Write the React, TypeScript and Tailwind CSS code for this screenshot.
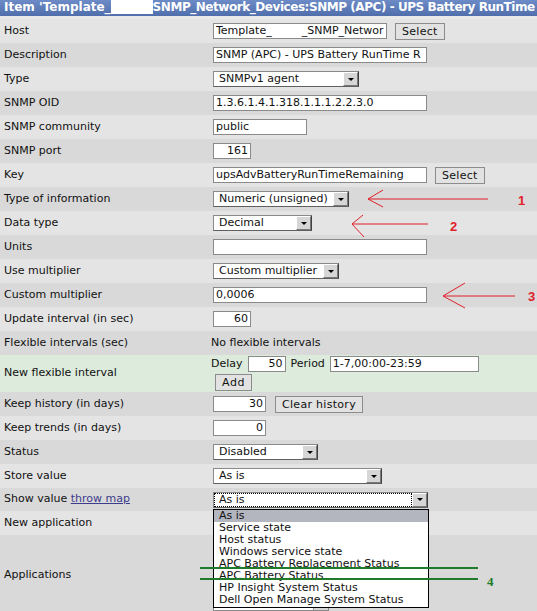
import type { ReactNode } from 'react'

// Zabbix 1.8 style item edit form

function Input({ className = '', children }: { className?: string; children?: ReactNode }) {
  return (
    <div
      className={`h-[16px] border border-[#8a8a8a] bg-white px-[2px] leading-[14px] overflow-hidden whitespace-nowrap ${className}`}
    >
      {children}
    </div>
  )
}

function Select({ className = '', value, focused }: { className?: string; value: string; focused?: boolean }) {
  return (
    <div className={`h-[16px] flex border border-[#8a8a8a] border-r-[#404040] border-b-[#606060] bg-white ${className}`}>
      <div className="flex-1 p-[1px] overflow-hidden">
        <div
          className={`h-full pl-[4px] leading-[12px] whitespace-nowrap ${
            focused ? 'outline outline-1 outline-dotted outline-black' : ''
          }`}
        >
          {value}
        </div>
      </div>
      <div className="w-[15px] h-full flex items-center justify-center bg-[#d6d6d6] border-t border-l border-t-white border-l-white border-r border-b border-r-[#7a7a7a] border-b-[#7a7a7a]">
        <div className="w-0 h-0 border-l-[3px] border-r-[3px] border-t-[3px] border-l-transparent border-r-transparent border-t-black" />
      </div>
    </div>
  )
}

function Button({ children, className = '' }: { children: ReactNode; className?: string }) {
  return (
    <div
      className={`h-[17px] px-[6px] border border-[#8c8c8c] bg-[#e2e2e2] leading-[15px] whitespace-nowrap tracking-[0.3px] ${className}`}
    >
      {children}
    </div>
  )
}

function Row({
  label,
  children,
  tone,
  className = 'h-[24px]',
}: {
  label: ReactNode
  children?: ReactNode
  tone: 'light' | 'dark' | 'green'
  className?: string
}) {
  const bg = tone === 'green' ? 'bg-[#dcebdb]' : tone === 'light' ? 'bg-[#e4e4e4]' : 'bg-[#d9d9d9]'
  return (
    <div className={`flex ${bg} ${className}`}>
      <div className="w-[211px] pl-[4px] flex items-center shrink-0">{label}</div>
      <div className="flex-1 relative flex items-center pl-[2px]">{children}</div>
    </div>
  )
}

const showValueOptions = [
  'As is',
  'Service state',
  'Host status',
  'Windows service state',
  'APC Battery Replacement Status',
  'APC Battery Status',
  'HP Insight System Status',
  'Dell Open Manage System Status',
]

export default function App() {
  return (
    <div className="relative w-[537px] h-[611px] overflow-hidden bg-[#dedede] font-['DejaVu_Sans',sans-serif] text-[11px] text-[#111]">
      {/* title bar */}
      <div className="h-[19px] bg-gradient-to-b from-[#6d8bc6] to-[#4f6eab] border-b-[3px] border-[#e9e9e9] text-white font-bold text-[12px] leading-[15px] pl-[4px] whitespace-nowrap overflow-hidden">
        Item 'Template_
        <span className="inline-block align-top w-[42px] h-[14px] bg-white" />
        <span className="tracking-[-0.45px]">SNMP_Network_Devices:SNMP (APC) - UPS Battery RunTime</span>
      </div>

      <Row label="Host" tone="light">
        <Input className="w-[174px]">
          Template_<span className="inline-block w-[30px]" />_SNMP_Networ
        </Input>
        <Button className="ml-[8px]">Select</Button>
      </Row>
      <Row label="Description" tone="dark">
        <Input className="w-[214px]">SNMP (APC) - UPS Battery RunTime R</Input>
      </Row>
      <Row label="Type" tone="light">
        <Select className="w-[146px]" value="SNMPv1 agent" />
      </Row>
      <Row label="SNMP OID" tone="dark">
        <Input className="w-[214px]">1.3.6.1.4.1.318.1.1.1.2.2.3.0</Input>
      </Row>
      <Row label="SNMP community" tone="light">
        <Input className="w-[94px]">public</Input>
      </Row>
      <Row label="SNMP port" tone="dark">
        <Input className="w-[38px] text-right">161</Input>
      </Row>
      <Row label="Key" tone="light">
        <Input className="w-[214px]">upsAdvBatteryRunTimeRemaining</Input>
        <Button className="ml-[8px]">Select</Button>
      </Row>
      <Row label="Type of information" tone="dark">
        <Select className="w-[136px]" value="Numeric (unsigned)" />
      </Row>
      <Row label="Data type" tone="light">
        <Select className="w-[99px]" value="Decimal" />
      </Row>
      <Row label="Units" tone="dark">
        <Input className="w-[214px]" />
      </Row>
      <Row label="Use multiplier" tone="light">
        <Select className="w-[126px]" value="Custom multiplier" />
      </Row>
      <Row label="Custom multiplier" tone="dark">
        <Input className="w-[214px]">0,0006</Input>
      </Row>
      <Row label="Update interval (in sec)" tone="light">
        <Input className="w-[38px] text-right">60</Input>
      </Row>
      <Row label="Flexible intervals (sec)" tone="dark">
        <span className="-ml-[2px]">No flexible intervals</span>
      </Row>
      <Row label="New flexible interval" tone="green" className="h-[37px]">
        <div className="-ml-[2px] flex flex-col gap-[2px]">
          <div className="flex items-center">
            <span>Delay</span>
            <Input className="w-[38px] ml-[5px] text-right">50</Input>
            <span className="ml-[5px]">Period</span>
            <Input className="w-[149px] ml-[5px]">1-7,00:00-23:59</Input>
          </div>
          <Button className="ml-[4px] self-start tracking-[0.6px]">Add</Button>
        </div>
      </Row>
      <Row label="Keep history (in days)" tone="dark">
        <Input className="w-[53px] text-right">30</Input>
        <Button className="ml-[9px]">Clear history</Button>
      </Row>
      <Row label="Keep trends (in days)" tone="light">
        <Input className="w-[53px] text-right">0</Input>
      </Row>
      <Row label="Status" tone="dark">
        <Select className="w-[105px]" value="Disabled" />
      </Row>
      <Row label="Store value" tone="light">
        <Select className="w-[169px]" value="As is" />
      </Row>
      <Row
        label={
          <span>
            Show value <span className="text-[#3c3c8c] underline">throw map</span>
          </span>
        }
        tone="dark"
        className="h-[23px] relative z-10"
      >
        <div className="relative">
          <Select className="w-[215px]" value="As is" focused />
          {/* open list of value maps */}
          <div className="absolute left-0 top-[17px] w-[216px] bg-white border border-black pb-[1px]">
            {showValueOptions.map((opt, i) => (
              <div
                key={opt}
                className={`h-[12px] leading-[12px] pl-[5px] whitespace-nowrap ${i === 0 ? 'bg-[#b3b5bf]' : ''}`}
              >
                {opt}
              </div>
            ))}
          </div>
        </div>
      </Row>
      <Row label="New application" tone="light">
        <Input className="w-[214px]" />
      </Row>
      <Row label="Applications" tone="dark" className="h-[80px]">
        <div className="self-start mt-[2px] w-[116px] h-[74px] border border-[#8a8a8a] bg-white flex justify-end">
          <div className="w-[15px] h-full bg-[#d6d6d6] border-l border-[#9a9a9a]" />
        </div>
      </Row>

      {/* annotation marks */}
      <svg className="absolute inset-0 pointer-events-none z-20" width="537" height="611">
        <g stroke="#e0202a" strokeWidth="1" fill="none">
          <path d="M368 199 H488 M368 199 L383 190 M368 199 L383 207" />
          <path d="M352 224 H428 M352 224 L363 215 M352 224 L364 237" />
          <path d="M443 296 H515 M443 296 L465 283 M443 296 L465 308" />
        </g>
        <g fill="#e0202a" fontFamily="'Liberation Sans', sans-serif" fontWeight="bold" fontSize="13">
          <text x="518" y="205">1</text>
          <text x="450" y="231">2</text>
          <text x="528" y="301">3</text>
        </g>
        <g stroke="#1f7a2a" strokeWidth="2">
          <path d="M200 568 H478 M200 579 H478" />
        </g>
        <text x="487" y="586" fill="#1f7a2a" fontFamily="'Liberation Serif', serif" fontWeight="bold" fontSize="13">
          4
        </text>
      </svg>
    </div>
  )
}
